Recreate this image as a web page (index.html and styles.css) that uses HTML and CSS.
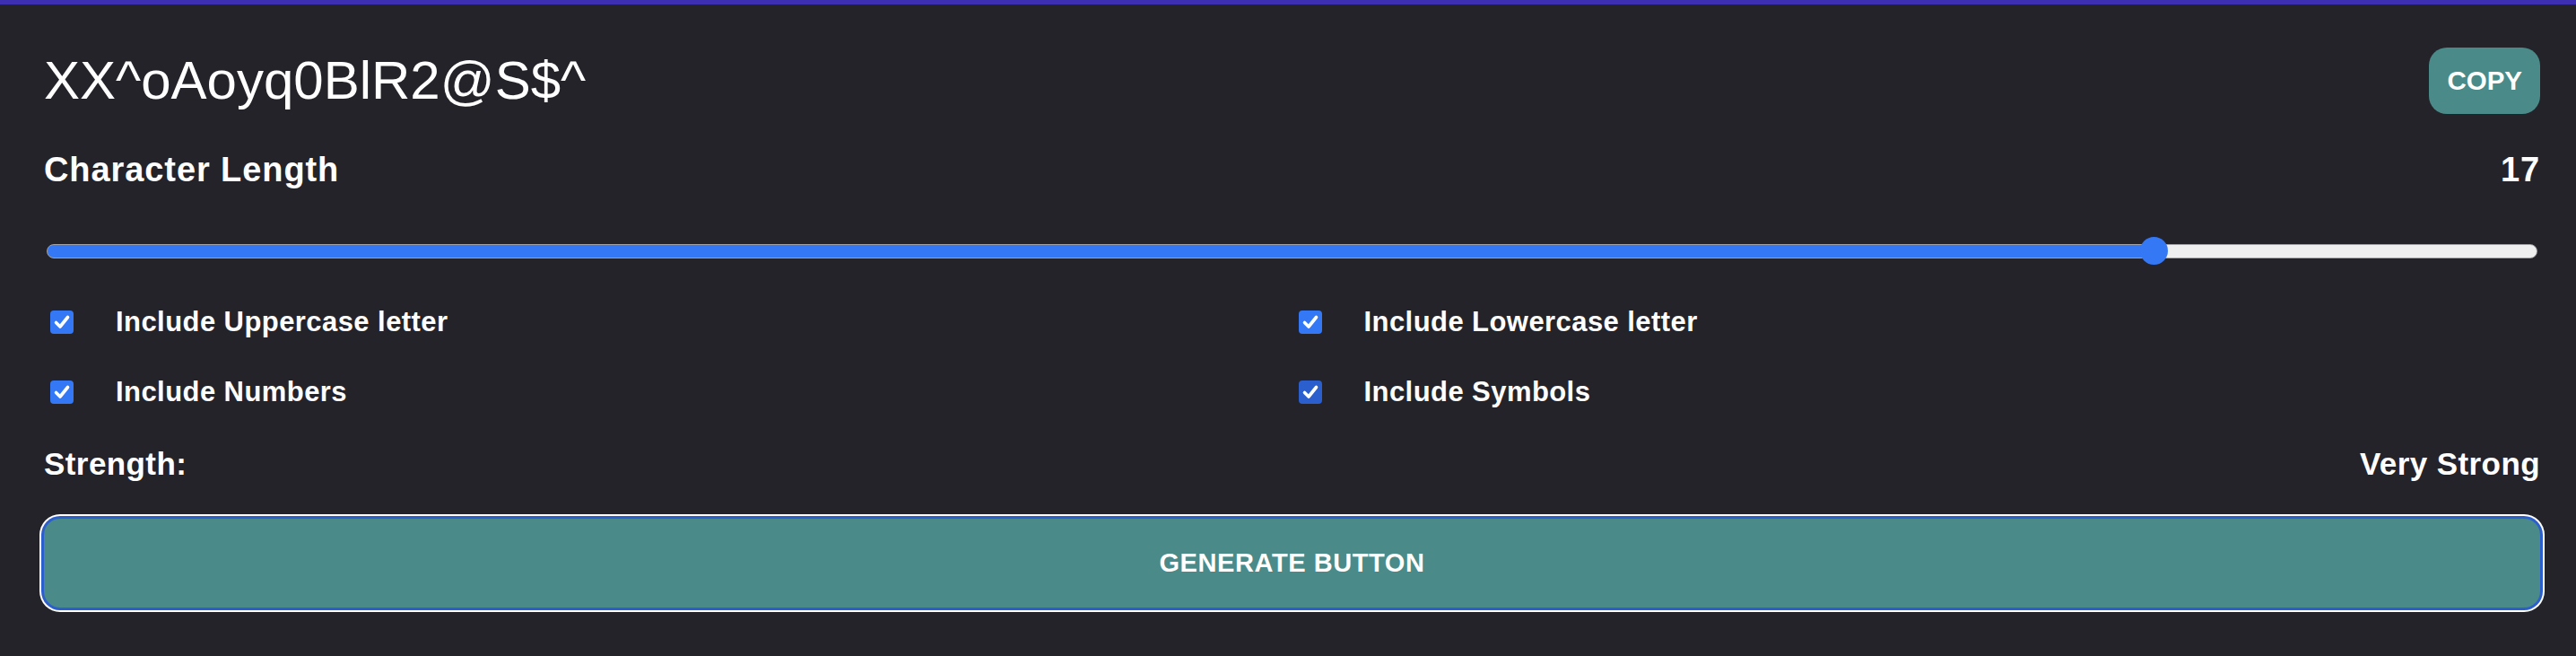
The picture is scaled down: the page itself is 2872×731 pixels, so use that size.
FILE: index.html
```html
<!DOCTYPE html>
<html lang="en">
<head>
<meta charset="utf-8">
<title>Password Generator</title>
<link rel="stylesheet" href="styles.css">
</head>
<body>
<div class="top-bar"></div>
<main class="card">
  <div class="output-row">
    <span class="password">XX^oAoyq0BlR2@S$^</span>
    <button class="copy-btn" type="button">COPY</button>
  </div>
  <div class="length-row">
    <span>Character Length</span>
    <span>17</span>
  </div>
  <div class="slider" style="--p: 0.85">
    <div class="track"></div>
    <div class="thumb"></div>
  </div>
  <div class="options">
    <label class="option"><span class="box"><svg viewBox="0 0 26 26"><path d="M6.5 13.5 L11 18 L19.5 7.5"/></svg></span><span class="opt-label">Include Uppercase letter</span></label>
    <label class="option"><span class="box"><svg viewBox="0 0 26 26"><path d="M6.5 13.5 L11 18 L19.5 7.5"/></svg></span><span class="opt-label">Include Lowercase letter</span></label>
    <label class="option"><span class="box"><svg viewBox="0 0 26 26"><path d="M6.5 13.5 L11 18 L19.5 7.5"/></svg></span><span class="opt-label">Include Numbers</span></label>
    <label class="option"><span class="box box-focus"><svg viewBox="0 0 26 26"><path d="M6.5 13.5 L11 18 L19.5 7.5"/></svg></span><span class="opt-label">Include Symbols</span></label>
  </div>
  <div class="strength-row">
    <span>Strength:</span>
    <span>Very Strong</span>
  </div>
  <button class="generate-btn" type="button">GENERATE BUTTON</button>
</main>
</body>
</html>
```

FILE: styles.css
```css
* { box-sizing: border-box; }

html, body {
  margin: 0;
  height: 100%;
  background: #24232a;
  color: #ffffff;
  font-family: "Liberation Sans", Arial, Helvetica, sans-serif;
}

.top-bar {
  height: 5px;
  background: #3d2fb2;
}

.card {
  padding: 48px 40px 0 49px;
  display: flex;
  flex-direction: column;
}

.output-row {
  display: flex;
  justify-content: space-between;
  align-items: center;
  height: 74px;
}

.password {
  font-size: 60px;
  line-height: 1.117;
  font-weight: 400;
}

.copy-btn {
  height: 74px;
  padding: 0 20px;
  border: none;
  border-radius: 20px;
  background: #4a8a88;
  color: #ffffff;
  font-family: inherit;
  font-size: 29.5px;
  font-weight: 700;
  cursor: pointer;
}

.length-row {
  margin-top: 41px;
  display: flex;
  justify-content: space-between;
  align-items: center;
  font-size: 38px;
  line-height: 42px;
  font-weight: 700;
  letter-spacing: 0.024em;
}

.slider {
  position: relative;
  margin: 54px 3px 0 3px;
  height: 32px;
  display: flex;
  align-items: center;
}

.track {
  width: 100%;
  height: 16px;
  border-radius: 8px;
  border: 1px solid #a3a3a6;
  background: linear-gradient(to right, #3478f6 0, #3478f6 calc(15.5px + (100% - 31px) * var(--p)), #efefef calc(15.5px + (100% - 31px) * var(--p)), #efefef 100%);
}

.thumb {
  position: absolute;
  top: 0;
  left: calc((100% - 31px) * var(--p));
  width: 31px;
  height: 31px;
  border-radius: 50%;
  background: #3478f6;
}

.options {
  margin-top: 37px;
  display: grid;
  grid-template-columns: 1fr 1fr;
  row-gap: 26px;
}

.option {
  display: flex;
  align-items: center;
  height: 52px;
  gap: 47px;
  padding-left: 7px;
  font-size: 31px;
  font-weight: 700;
  letter-spacing: 0.014em;
}

.box {
  width: 26px;
  height: 26px;
  border-radius: 4px;
  background: #3478f6;
  display: flex;
  flex: none;
}

.box-focus {
  background: #2b5fcd;
}

.box svg {
  width: 26px;
  height: 26px;
}

.box path {
  fill: none;
  stroke: #ffffff;
  stroke-width: 3.6;
  stroke-linecap: round;
  stroke-linejoin: round;
}

.strength-row {
  margin-top: 34px;
  display: flex;
  justify-content: space-between;
  align-items: center;
  font-size: 35px;
  line-height: 39px;
  font-weight: 700;
  letter-spacing: 0.012em;
}

.generate-btn {
  margin-top: 42px;
  height: 99px;
  width: 100%;
  border: none;
  border-radius: 18px;
  background: #4a8a88;
  color: #ffffff;
  font-family: inherit;
  font-size: 29px;
  font-weight: 700;
  letter-spacing: 0.02em;
  box-shadow: 0 0 0 3px #2c5fcb, 0 0 0 5px #ffffff;
  cursor: pointer;
}
```
